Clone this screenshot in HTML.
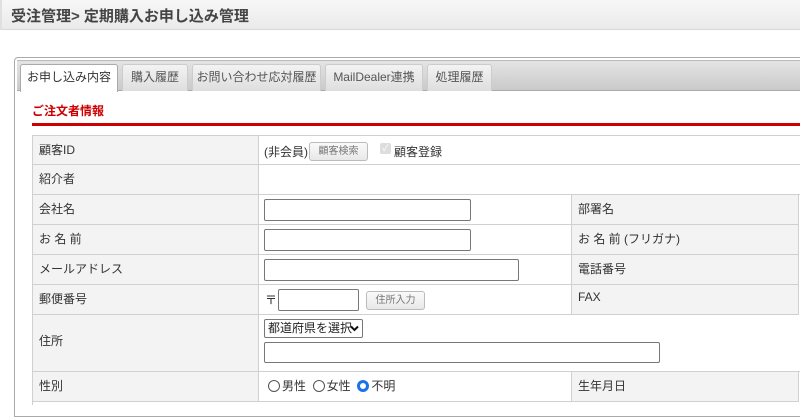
<!DOCTYPE html>
<html><head><meta charset="utf-8"><style>
*{box-sizing:border-box;margin:0;padding:0}
body{width:800px;height:400px;overflow:hidden;background:#fff;font-family:"Liberation Sans","Noto Sans CJK JP",sans-serif;font-size:12px;color:#333;position:relative}
.a{position:absolute}
.hdr{left:0;top:0;width:800px;height:30px;background:linear-gradient(#f7f7f7,#eaeaea);border-bottom:1px solid #d8d8d8;border-left:2px solid #e0e0e0}
.hdr span{position:absolute;left:9px;top:5px;font-size:15px;font-weight:bold;color:#444}
.panel{left:14px;top:57px;width:800px;height:360px;border:1px solid #aaa;border-radius:4px 0 0 0}
.bar{left:17px;top:60px;width:790px;height:31px;background:linear-gradient(#e4e4e4,#cacaca);border-top:1px solid #bbb;border-bottom:1px solid #aaa}
.tab{top:64px;height:27px;background:linear-gradient(#f3f3f3,#dedede);border:1px solid #ccc;border-bottom:none;border-radius:3px 3px 0 0;text-align:center;line-height:24px;color:#555;font-size:12px}
.tab.on{background:#fff;color:#333;height:28px;border-color:#aaa}
.ttl{left:32px;top:102px;color:#c00;font-weight:bold;font-size:12px}
.red{left:32px;top:123px;width:770px;height:3px;background:#c00}
.c{border-right:1px solid #d0d0d0;border-bottom:1px solid #d0d0d0;padding:5px 0 0 6px}
.l{background:#f2f3f2}
.in{border:1px solid #777;border-radius:2px;background:#fff}
.btn{border:1px solid #bbb;border-radius:3px;background:linear-gradient(#fafafa,#e8e8e8);font-size:10px;color:#777;text-align:center;line-height:17px}
.rad{width:12px;height:12px;border:1px solid #555;border-radius:50%;display:inline-block;vertical-align:-2px;margin-right:2px}
</style></head><body>
<div class="a hdr"><span>受注管理&gt; 定期購入お申し込み管理</span></div>
<div class="a panel"></div>
<div class="a bar"></div>
<div class="a tab on" style="left:20px;width:98px">お申し込み内容</div>
<div class="a tab" style="left:122px;width:66px">購入履歴</div>
<div class="a tab" style="left:192px;width:129px">お問い合わせ応対履歴</div>
<div class="a tab" style="left:325px;width:98px">MailDealer連携</div>
<div class="a tab" style="left:427px;width:65px">処理履歴</div>
<div class="a ttl">ご注文者情報</div>
<div class="a red"></div>
<div class="a" style="left:32px;top:135px;width:770px;height:1px;background:#d0d0d0"></div>
<div class="a" style="left:32px;top:135px;width:1px;height:270px;background:#d0d0d0"></div>

<div class="a c l" style="left:33px;top:136px;width:226px;height:29px">顧客ID</div>
<div class="a c" style="left:259px;top:136px;width:545px;height:29px;padding:0"><span class="a" style="left:5px;top:7px">(非会員)</span><div class="a btn" style="left:50px;top:6px;width:59px;height:19px">顧客検索</div><span class="a" style="left:121px;top:7px;width:11px;height:11px;background:#ddd;border-radius:2px;color:#fff;font-size:9px;line-height:11px;text-align:center">✓</span><span class="a" style="left:135px;top:7px">顧客登録</span></div>

<div class="a c l" style="left:33px;top:165px;width:226px;height:30px">紹介者</div>
<div class="a c" style="left:259px;top:165px;width:545px;height:30px"></div>

<div class="a c l" style="left:33px;top:195px;width:226px;height:30px">会社名</div>
<div class="a c" style="left:259px;top:195px;width:313px;height:30px"></div>
<div class="a in" style="left:264px;top:199px;width:207px;height:22px"></div>
<div class="a c l" style="left:572px;top:195px;width:227px;height:30px">部署名</div>

<div class="a c l" style="left:33px;top:225px;width:226px;height:30px">お 名 前</div>
<div class="a c" style="left:259px;top:225px;width:313px;height:30px"></div>
<div class="a in" style="left:264px;top:229px;width:207px;height:22px"></div>
<div class="a c l" style="left:572px;top:225px;width:227px;height:30px">お 名 前 (フリガナ)</div>

<div class="a c l" style="left:33px;top:255px;width:226px;height:30px">メールアドレス</div>
<div class="a c" style="left:259px;top:255px;width:313px;height:30px"></div>
<div class="a in" style="left:264px;top:259px;width:255px;height:22px"></div>
<div class="a c l" style="left:572px;top:255px;width:227px;height:30px">電話番号</div>

<div class="a c l" style="left:33px;top:285px;width:226px;height:30px">郵便番号</div>
<div class="a c" style="left:259px;top:285px;width:313px;height:30px;padding:0"><span class="a" style="left:6px;top:6px">〒</span></div>
<div class="a in" style="left:278px;top:289px;width:81px;height:22px"></div>
<div class="a btn" style="left:366px;top:291px;width:59px;height:19px">住所入力</div>
<div class="a c l" style="left:572px;top:285px;width:227px;height:30px">FAX</div>

<div class="a c l" style="left:33px;top:315px;width:226px;height:57px;padding-top:17px">住所</div>
<div class="a c" style="left:259px;top:315px;width:545px;height:57px"></div>
<div class="a in" style="left:264px;top:319px;width:99px;height:19px;font-size:12px;color:#222;padding:0 0 0 3px;border-radius:2px;line-height:16px">都道府県を選択<svg class="a" style="left:85px;top:5px" width="9" height="7" viewBox="0 0 9 7"><path d="M1 1.5L4.5 5 8 1.5" fill="none" stroke="#111" stroke-width="2"/></svg></div>
<div class="a in" style="left:264px;top:342px;width:396px;height:21px"></div>

<div class="a c l" style="left:33px;top:372px;width:226px;height:30px">性別</div>
<div class="a c" style="left:259px;top:372px;width:313px;height:30px;padding:5px 0 0 9px"><span class="rad"></span>男性&nbsp; <span class="rad"></span>女性&nbsp; <span class="rad" style="border:3px solid #1a73e8;box-shadow:inset 0 0 0 1px #fff"></span>不明</div>
<div class="a c l" style="left:572px;top:372px;width:227px;height:30px">生年月日</div>
</body></html>
